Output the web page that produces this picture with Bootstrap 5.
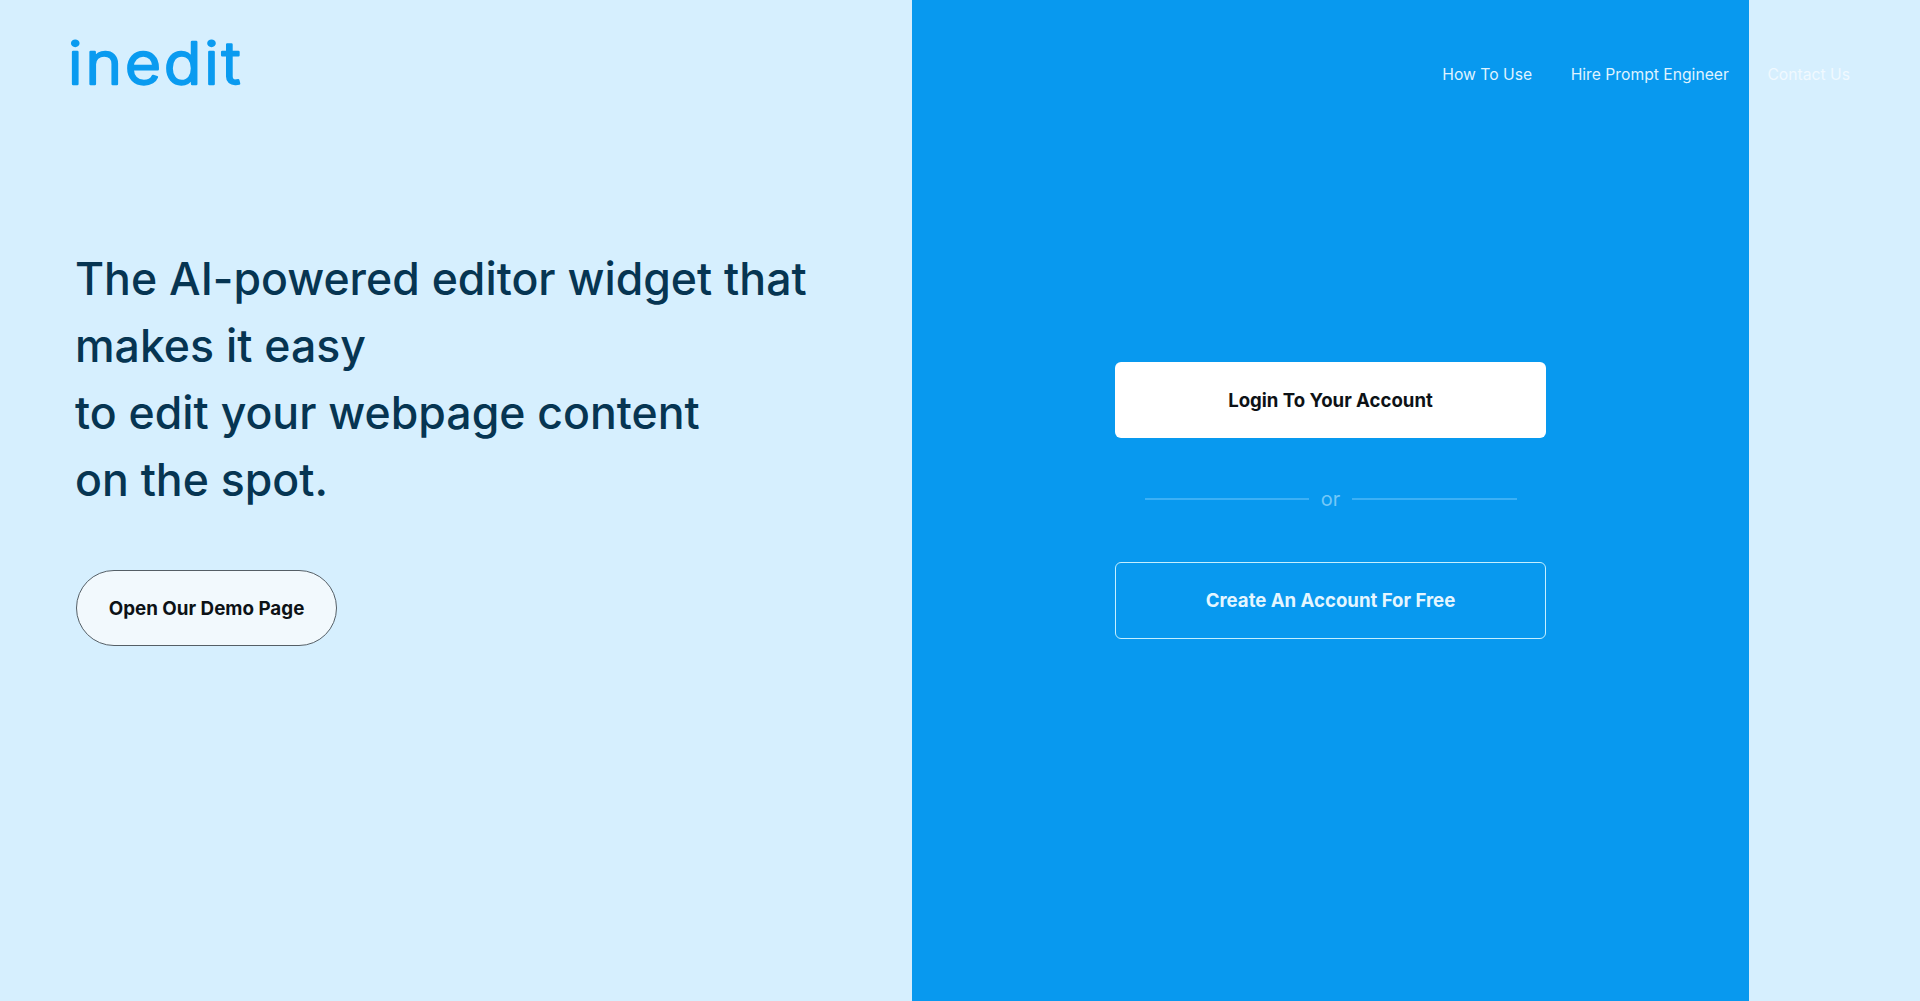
<!DOCTYPE html>
<html lang="en">
<head>
<meta charset="utf-8">
<title>inedit</title>
<link href="https://cdn.jsdelivr.net/npm/bootstrap@5.3.0/dist/css/bootstrap.min.css" rel="stylesheet">
<style>
body { font-family: Inter, "Liberation Sans", sans-serif; background: #d6effe; overflow: hidden; }
.stage { height: 1001px; }
.side-left { width: 912px; padding: 20px 0 0 75px; }
.side-blue { width: 837px; background: #0899ef; }
.side-rest { flex: 1; }
.brand-logo { display: block; margin-left: -8px; width: 220px; height: 80px; }
.brand-logo text { font-family: Inter, sans-serif; font-size: 58px; font-weight: 300; fill: #0a9bf0; stroke: #0a9bf0; stroke-width: 2.4px; stroke-linejoin: round; stroke-linecap: round; letter-spacing: 2.8px; }
.hero-title { margin: 146px 0 0; font-size: 44.6px; font-weight: 500; line-height: 67px; color: #063552; }
.demo-btn { margin: 56px 0 0 1px; width: 261px; height: 76px; padding-top: 8px; border: 1px solid #555f66; border-radius: 38px; background: #f2f9fd; color: #0d1216; font-size: 18.8px; font-weight: 700; }
.demo-btn:hover { background: #f2f9fd; color: #0d1216; border-color: #555f66; }
.top-links { top: 63px; right: 70px; gap: 38.5px; }
.top-links a { color: #dff3ff; font-size: 15.7px; line-height: 24px; text-decoration: none; }
.top-links a.faint-link { color: #f0f9ff; }
.auth-box { width: 431px; }
.auth-btn { font-size: 18.6px; font-weight: 700; border-radius: 6px; display: flex; align-items: center; justify-content: center; }
.auth-solid, .auth-solid:hover { height: 76px; padding-top: 8px; background: #fff; color: #0d1216; border: 0; }
.auth-line, .auth-line:hover { height: 77px; background: transparent; color: #e4f6ff; border: 1.5px solid #c4efff; }
.or-row { margin: 0 auto; padding: 48px 0 50px; width: 372px; gap: 12px; color: #74c8f8; font-size: 20px; line-height: 26px; }
.or-row span { flex: 1; height: 2px; background: #3cb0f5; }
</style>
</head>
<body>
<div class="stage d-flex position-relative">
  <main class="side-left">
    <svg class="brand-logo" viewBox="0 0 220 80"><text transform="translate(1 64) scale(1.07 1)">inedit</text></svg>
    <h1 class="hero-title">The AI-powered editor widget that<br>makes it easy<br>to edit your webpage content<br>on the spot.</h1>
    <a href="#" class="btn demo-btn d-inline-flex align-items-center justify-content-center">Open Our Demo Page</a>
  </main>
  <section class="side-blue d-flex align-items-center justify-content-center">
    <div class="auth-box">
      <a href="#" class="btn auth-btn auth-solid">Login To Your Account</a>
      <div class="or-row d-flex align-items-center"><span></span>or<span></span></div>
      <a href="#" class="btn auth-btn auth-line">Create An Account For Free</a>
    </div>
  </section>
  <div class="side-rest"></div>
  <nav class="top-links position-absolute d-flex">
    <a href="#">How To Use</a>
    <a href="#">Hire Prompt Engineer</a>
    <a href="#" class="faint-link">Contact Us</a>
  </nav>
</div>
<script src="https://cdn.jsdelivr.net/npm/bootstrap@5.3.0/dist/js/bootstrap.bundle.min.js"></script>
</body>
</html>
